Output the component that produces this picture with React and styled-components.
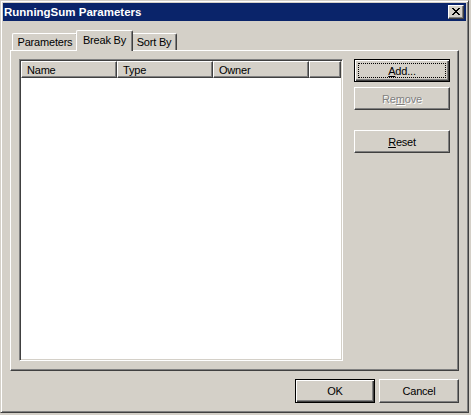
import React from 'react';
import styled, { createGlobalStyle } from 'styled-components';

const GlobalStyle = createGlobalStyle`
  html, body { margin: 0; padding: 0; background: #d4d0c8; }
  body {
    font-family: "Liberation Sans", Arial, sans-serif;
    font-size: 11px;
    letter-spacing: -0.2px;
    color: #000;
  }
`;

const Window = styled.div`
  width: 469px;
  height: 413px;
  box-sizing: border-box;
  background: #d4d0c8;
  border: 1px solid;
  border-color: #d4d0c8 #404040 #404040 #d4d0c8;
  box-shadow: inset 1px 1px 0 #fff, inset -1px -1px 0 #808080;
  padding: 2px;
  display: flex;
  flex-direction: column;
`;

const TitleBar = styled.div`
  height: 18px;
  flex: none;
  background: #0a246a;
  display: flex;
  align-items: center;
  justify-content: space-between;
  padding: 0 2px 0 1px;
`;

const Title = styled.span`
  color: #fff;
  font-weight: bold;
  font-size: 11.5px;
  letter-spacing: 0;
`;

const CloseButton = styled.div`
  width: 16px;
  height: 14px;
  box-sizing: border-box;
  background: #d4d0c8;
  border: 1px solid;
  border-color: #fff #404040 #404040 #fff;
  box-shadow: inset -1px -1px 0 #808080;
  display: flex;
  align-items: center;
  justify-content: center;
  padding-bottom: 1px;
`;

const Client = styled.div`
  flex: 1;
  display: flex;
  flex-direction: column;
  padding: 9px 7px 7px;
`;

const TabStrip = styled.div`
  display: flex;
  align-items: flex-end;
  height: 20px;
  padding-left: 2px;
  position: relative;
  z-index: 1;
`;

const Tab = styled.div`
  width: ${p => p.$w}px;
  height: ${p => (p.$active ? 21 : 17)}px;
  margin: 0 ${p => (p.$active ? -2 : 0)}px ${p => (p.$active ? -1 : 0)}px;
  box-sizing: border-box;
  background: #d4d0c8;
  border-top: 1px solid #fff;
  border-left: 1px solid #fff;
  border-right: 1px solid #404040;
  border-radius: 2px 2px 0 0;
  box-shadow: inset -1px 0 0 #808080;
  display: flex;
  align-items: center;
  justify-content: center;
  padding-bottom: ${p => (p.$active ? 3 : 0)}px;
  position: relative;
  z-index: ${p => (p.$active ? 2 : 1)};
`;

const Panel = styled.div`
  height: 321px;
  box-sizing: border-box;
  border: 1px solid;
  border-color: #fff #404040 #404040 #fff;
  box-shadow: inset -1px -1px 0 #808080;
  padding: 8px;
  display: grid;
  grid-template-columns: 324px 96px;
  column-gap: 11px;
  align-items: start;
`;

const List = styled.div`
  height: 302px;
  box-sizing: border-box;
  background: #fff;
  border: 1px solid;
  border-color: #808080 #fff #fff #808080;
  box-shadow: inset 1px 1px 0 #404040, inset -1px -1px 0 #d4d0c8;
  padding: 1px;
`;

const HeaderRow = styled.div`
  display: flex;
  height: 17px;
`;

const HeaderCell = styled.div`
  width: ${p => p.$w}px;
  box-sizing: border-box;
  background: #d4d0c8;
  border: 1px solid;
  border-color: #fff #404040 #404040 #fff;
  box-shadow: inset -1px -1px 0 #808080;
  padding-left: 5px;
  display: flex;
  align-items: center;
`;

const SideButtons = styled.div`
  display: flex;
  flex-direction: column;
`;

const Button = styled.button`
  position: relative;
  width: ${p => (p.$w ? `${p.$w}px` : '100%')};
  height: ${p => p.$h || 23}px;
  margin-top: ${p => p.$mt || 0}px;
  box-sizing: border-box;
  padding: 0;
  font: inherit;
  letter-spacing: inherit;
  color: ${p => (p.$disabled ? '#808080' : '#000')};
  text-shadow: ${p => (p.$disabled ? '1px 1px 0 #fff' : 'none')};
  background: #d4d0c8;
  border: 1px solid;
  border-color: ${p => (p.$default ? '#000' : '#fff #404040 #404040 #fff')};
  box-shadow: ${p =>
    p.$default
      ? 'inset 1px 1px 0 #fff, inset -1px -1px 0 #404040, inset -2px -2px 0 #808080'
      : 'inset -1px -1px 0 #808080, inset 1px 1px 0 #d4d0c8'};
  cursor: default;

  &::after {
    content: '';
    display: ${p => (p.$focus ? 'block' : 'none')};
    position: absolute;
    inset: 3px;
    border: 1px dotted #000;
  }
`;

const Footer = styled.div`
  display: flex;
  justify-content: flex-end;
  gap: 4px;
  margin-top: 8px;
`;

const CloseGlyph = () => (
  <svg width="8" height="7" viewBox="0 0 8 7" shapeRendering="crispEdges">
    <path
      fill="#000"
      d="M0 0h2v1H0zM6 0h2v1H6zM1 1h2v1H1zM5 1h2v1H5zM2 2h4v1H2zM3 3h2v1H3zM2 4h4v1H2zM1 5h2v1H1zM5 5h2v1H5zM0 6h2v1H0zM6 6h2v1H6z"
    />
  </svg>
);

export default function App() {
  return (
    <>
      <GlobalStyle />
      <Window>
        <TitleBar>
          <Title>RunningSum Parameters</Title>
          <CloseButton><CloseGlyph /></CloseButton>
        </TitleBar>
        <Client>
          <TabStrip>
            <Tab $w={66}>Parameters</Tab>
            <Tab $w={57} $active>Break By</Tab>
            <Tab $w={46}>Sort By</Tab>
          </TabStrip>
          <Panel>
            <List>
              <HeaderRow>
                <HeaderCell $w={96}>Name</HeaderCell>
                <HeaderCell $w={96}>Type</HeaderCell>
                <HeaderCell $w={96}>Owner</HeaderCell>
                <HeaderCell $w={32} />
              </HeaderRow>
            </List>
            <SideButtons>
              <Button $default $focus><u>A</u>dd...</Button>
              <Button $mt={5} $disabled>Re<u>m</u>ove</Button>
              <Button $mt={20}><u>R</u>eset</Button>
            </SideButtons>
          </Panel>
          <Footer>
            <Button $w={80} $h={24} $default>OK</Button>
            <Button $w={80} $h={24}>Cancel</Button>
          </Footer>
        </Client>
      </Window>
    </>
  );
}
